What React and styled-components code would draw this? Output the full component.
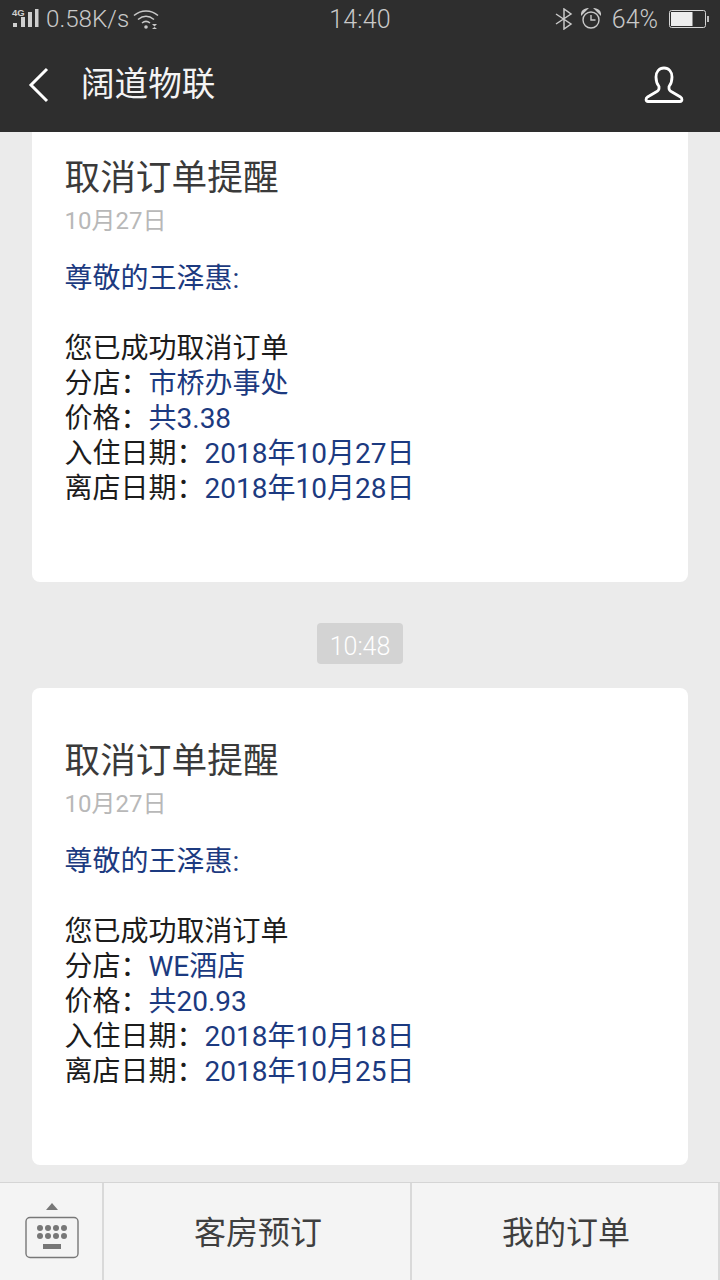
import React from "react";
import styled, { createGlobalStyle } from "styled-components";

const Global = createGlobalStyle`
  html, body { margin: 0; padding: 0; background: #ebebeb; }
  * { box-sizing: border-box; }
`;
const FONT = `Roboto, "Noto Sans CJK SC", sans-serif`;

const Page = styled.div`
  width: 720px; height: 1280px; display: flex; flex-direction: column; overflow: hidden;
  background: #ebebeb; font-family: ${FONT};
`;
const TopBar = styled.header`
  height: 132px; flex: none; background: #2e2e2e; display: flex; flex-direction: column;
  position: relative; z-index: 1;
`;
const StatusBar = styled.div`
  height: 38px; display: grid; grid-template-columns: 1fr auto 1fr; align-items: center;
  padding: 0 11px 0 11px; color: #c9c9c9; font-size: 24.2px; font-weight: 300;
`;
const StatusGroup = styled.div`
  display: flex; align-items: center; gap: ${p => p.$gap || 4}px; justify-content: ${p => p.$end ? "flex-end" : "flex-start"};
`;
const Clock = styled.span`font-size: 25px; letter-spacing: 0.2px;`;
const Percent = styled.span`font-size: 25px; margin: 0 3px;`;
const NavRow = styled.div`
  flex: 1; display: flex; align-items: center; padding: 0 36px 0 28px; color: #fff;
`;
const NavTitle = styled.h1`
  margin: 0 0 0 31px; flex: 1; font-size: 33.6px; font-weight: 400; color: #f4f4f4; line-height: 1;
`;
const Feed = styled.main`
  flex: 1; min-height: 0; overflow: hidden; padding: 0 32px;
`;
const FeedInner = styled.div`
  margin-top: -27px; display: flex; flex-direction: column;
`;
const Card = styled.article`
  height: 477px; background: #fff; border-radius: 8px; padding: 48px 32px 0 32.500px;
`;
const Title = styled.h2`
  margin: 0; font-size: 35.700px; font-weight: 400; color: #3a3a3a; line-height: 50px;
`;
const DateLine = styled.div`
  margin-top: 1px; font-size: 24px; color: #b8b8b8; line-height: 34px;
`;
const Greeting = styled.div`
  margin-top: 23px; font-size: 28px; color: #1c3a80; line-height: 35px; height: 70px;
`;
const Line = styled.div`
  font-size: 28px; color: #1c1c1c; line-height: 35px; white-space: pre;
`;
const Val = styled.span`color: #1c3a80;`;
const TimeWrap = styled.div`
  display: flex; justify-content: center; padding: 41px 0 24px;
`;
const TimeTag = styled.span`
  width: 86px; height: 41px; border-radius: 4px; background: #d3d3d3; color: #fff;
  font-size: 25px; line-height: 47px; text-align: center; font-weight: 300;
`;
const Footer = styled.footer`
  height: 98px; flex: none; background: #f4f4f4; border-top: 1px solid #d5d5d5;
  display: grid; grid-template-columns: 102px 308px 1fr; position: relative; z-index: 1;
`;
const KeyCell = styled.div`
  display: flex; flex-direction: column; align-items: center; padding-top: 19px; padding-left: 2px;
`;
const MenuButton = styled.div`
  display: flex; align-items: center; justify-content: center; border-left: 2px solid #d9d9d9;
  font-size: 32px; color: #3f3f3f; padding: 0 0 3px 2px;
  &:last-child { border-right: 2px solid #d9d9d9; }
`;

const Signal = () => (
  <svg width="31" height="24" viewBox="0 0 31 24" fill="#cfcfcf">
    <text x="1" y="9" fontSize="9.500" fontFamily="Liberation Sans" fontWeight="700">4G</text>
    <rect x="2" y="16" width="4" height="4" />
    <rect x="10" y="10" width="4" height="10" />
    <rect x="17" y="5" width="4" height="15" />
    <rect x="24" y="2" width="3.500" height="18" />
  </svg>
);
const Wifi = () => (
  <svg width="26" height="22" viewBox="0 0 26 22" fill="none" stroke="#c9c9c9" strokeWidth="1.600">
    <path d="M1 7.500C8 1.500 18 1.500 25 7.500" />
    <path d="M5 11.500C10 7.500 16 7.500 21 11.500" />
    <path d="M9 15C11.500 13 14.500 13 17 15" />
    <circle cx="13" cy="19" r="1.800" fill="#c9c9c9" stroke="none" />
    <path d="M20 16h5l-2.500 2.500zM20 21l2.500-2 2.500 2z" fill="#c9c9c9" stroke="none" transform="translate(-1 0)" />
  </svg>
);
const Bluetooth = () => (
  <svg width="18" height="22" viewBox="0 0 18 22" fill="none" stroke="#c9c9c9" strokeWidth="1.500">
    <path d="M1 6l15 10-7 5V1l7 5L1 16" />
  </svg>
);
const Alarm = () => (
  <svg width="20" height="22" viewBox="0 0 20 22" fill="none" stroke="#c9c9c9" strokeWidth="1.400">
    <circle cx="10" cy="12" r="8" />
    <path d="M10 7v5h4.500" />
    <path d="M1 5.500C1.500 3 3 2 5 1.500L1 5.500zM19 5.500C18.500 3 17 2 15 1.500L19 5.500z" strokeWidth="2" />
  </svg>
);
const Battery = () => (
  <svg width="40" height="18" viewBox="0 0 40 18">
    <rect x="0.500" y="0.500" width="36" height="17" rx="2" fill="none" stroke="#d5d5d5" />
    <rect x="2" y="2" width="21.500" height="14" fill="#eeeeee" />
    <rect x="38" y="6" width="2" height="6" fill="#bdbdbd" />
  </svg>
);
const Back = () => (
  <svg width="22" height="36" viewBox="0 0 22 36" fill="none" stroke="#fff" strokeWidth="3">
    <path d="M19 2L3 18l16 16" />
  </svg>
);
const Person = () => (
  <svg width="40" height="38" viewBox="0 0 40 38" fill="none" stroke="#fff" strokeWidth="2.800" strokeLinejoin="round">
    <path d="M20 2c-5 0-8 3.800-8 9 0 4 1 7 3 9.500v2c0 1.500-1 2.500-3 3.500l-8.500 5c-2 1.200-2 4.500.5 4.500h32c2.500 0 2.500-3.300.5-4.500l-8.500-5c-2-1-3-2-3-3.500v-2c2-2.500 3-5.500 3-9.500 0-5.200-3-9-8-9z" />
  </svg>
);
const Keyboard = () => (
  <svg width="56" height="58" viewBox="0 0 56 58" fill="#777">
    <path d="M28 1l6 7H22z" />
    <rect x="2" y="15.500" width="52" height="40" rx="4" fill="none" stroke="#777" strokeWidth="1.400" />
    {[0, 1, 2, 3].flatMap(i => [26, 34].map(y => (
      <circle key={`${i}-${y}`} cx={16 + i * 8} cy={y} r="3" />
    )))}
    <rect x="19" y="42" width="18" height="5" />
  </svg>
);

const orders = [
  { store: "市桥办事处", price: "共3.38", from: "2018年10月27日", to: "2018年10月28日" },
  { store: "WE酒店", price: "共20.93", from: "2018年10月18日", to: "2018年10月25日" },
];

const OrderCard = ({ o }) => (
  <Card>
    <Title>取消订单提醒</Title>
    <DateLine>10月27日</DateLine>
    <Greeting>尊敬的王泽惠:</Greeting>
    <Line>您已成功取消订单</Line>
    <Line>分店：<Val>{o.store}</Val></Line>
    <Line>价格：<Val>{o.price}</Val></Line>
    <Line>入住日期：<Val>{o.from}</Val></Line>
    <Line>离店日期：<Val>{o.to}</Val></Line>
  </Card>
);

export default function App() {
  return (
    <Page>
      <Global />
      <TopBar>
        <StatusBar>
          <StatusGroup>
            <Signal />
            <span>0.58K/s</span>
            <Wifi />
          </StatusGroup>
          <Clock>14:40</Clock>
          <StatusGroup $end $gap={8}>
            <Bluetooth />
            <Alarm />
            <Percent>64%</Percent>
            <Battery />
          </StatusGroup>
        </StatusBar>
        <NavRow>
          <Back />
          <NavTitle>阔道物联</NavTitle>
          <Person />
        </NavRow>
      </TopBar>
      <Feed>
        <FeedInner>
          <OrderCard o={orders[0]} />
          <TimeWrap><TimeTag>10:48</TimeTag></TimeWrap>
          <OrderCard o={orders[1]} />
        </FeedInner>
      </Feed>
      <Footer>
        <KeyCell><Keyboard /></KeyCell>
        <MenuButton>客房预订</MenuButton>
        <MenuButton>我的订单</MenuButton>
      </Footer>
    </Page>
  );
}
